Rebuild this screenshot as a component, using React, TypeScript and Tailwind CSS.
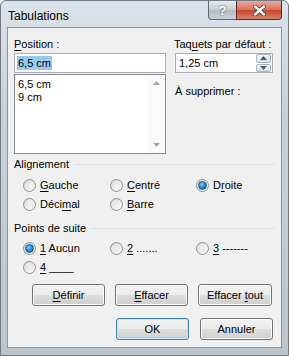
import React from 'react';

const font = { fontFamily: '"Liberation Sans", Arial, sans-serif' };

function U({ children }: { children: React.ReactNode }) {
    return <span className="underline underline-offset-[2px] decoration-[1px]">{children}</span>;
}

function Radio({ checked, label }: { checked?: boolean; label: React.ReactNode }) {
    return (
        <div className="flex items-center gap-[4px] h-[19px]">
            <div className="w-[13px] h-[13px] rounded-full border border-[#8e8f8f] bg-gradient-to-br from-[#d4d4d4] to-[#fcfcfc] flex items-center justify-center">
                <div className={`w-[9px] h-[9px] rounded-full ${checked ? 'bg-[radial-gradient(circle_at_40%_35%,#8fd3ff_0%,#2a8ad4_45%,#0b4f8f_100%)] border border-[#1d5a8c]' : 'bg-gradient-to-br from-[#e0e0e0] to-[#f8f8f8]'}`} />
            </div>
            <span className="text-[11px] text-black leading-[13px]">{label}</span>
        </div>
    );
}

function Btn({ children, def, w = 'w-[73px]' }: { children: React.ReactNode; def?: boolean; w?: string }) {
    return (
        <div className={`${w} h-[22px] rounded-[3px] border ${def ? 'border-[#3c7fb1] shadow-[inset_0_0_0_1px_#bfe7fb]' : 'border-[#707070] shadow-[inset_0_0_0_1px_#fcfcfc]'} bg-[linear-gradient(to_bottom,#f2f2f2_0%,#ebebeb_50%,#dddddd_51%,#cfcfcf_100%)] flex items-center justify-center text-[11px] text-black`}>
            <span className="whitespace-pre">{children}</span>
        </div>
    );
}

function GroupLabel({ children }: { children: React.ReactNode }) {
    return (
        <div className="flex items-center gap-[6px] h-[13px] mr-[6px]">
            <span className="text-[11px] leading-[13px] text-black">{children}</span>
            <div className="flex-1 h-px bg-[#d5dfe5]" />
        </div>
    );
}

export default function App() {
    return (
        <div style={font} className="w-[289px] h-[356px] flex flex-col bg-[linear-gradient(to_bottom,#dde3ea_0%,#c9d1d9_30%,#bcc4cc_100%)] rounded-t-[6px] border border-[#6f7a85]">
            {/* Title bar */}
            <div className="h-[26px] flex items-start justify-between">
                <span className="ml-[7px] mt-[8px] text-[12px] leading-[14px] text-black">Tabulations</span>
                <div className="flex mr-[6px]">
                    <div className="w-[28px] h-[19px] rounded-bl-[4px] border border-[#5f6770] border-t-0 border-r-0 bg-[linear-gradient(to_bottom,#e6e9ec_0%,#c9ced3_50%,#b3b9c0_51%,#cdd2d7_100%)] flex items-center justify-center">
                        <span className="text-white font-bold text-[13px] leading-none [text-shadow:0_0_2px_#333]">?</span>
                    </div>
                    <div className="w-[46px] h-[19px] rounded-br-[4px] border border-[#5f2a22] border-t-0 bg-[linear-gradient(to_bottom,#e9a99b_0%,#d7705b_50%,#c3452a_51%,#d8806a_100%)] flex items-center justify-center">
                        <svg width="13" height="11" viewBox="0 0 13 11">
                            <path d="M2 1.5 L11 9.5 M11 1.5 L2 9.5" stroke="#3a3a3a" strokeWidth="4" strokeLinecap="round" />
                            <path d="M2 1.5 L11 9.5 M11 1.5 L2 9.5" stroke="#ffffff" strokeWidth="2.4" strokeLinecap="round" />
                        </svg>
                    </div>
                </div>
            </div>

            {/* Client area */}
            <div className="mx-[6px] mb-[7px] flex-1 border border-[#8794a2] bg-[#f0f0f0] flex flex-col pt-[10px]">
                <div className="flex">
                    {/* Left column */}
                    <div className="ml-[6px] w-[152px] flex flex-col">
                        <span className="text-[11px] leading-[13px] text-black"><U>P</U>osition :</span>
                        <div className="mt-[2px] h-[20px] border border-[#abadb3] bg-white flex items-center pl-[2px]">
                            <span className="text-[11px] leading-[14px] bg-[#99c9ef] text-black px-[1px]">6,5 cm</span>
                        </div>
                        <div className="mt-px h-[80px] border border-[#828790] bg-white flex">
                            <div className="flex-1 pl-[3px] pt-[3px] text-[11px] leading-[13px] text-black">
                                <div>6,5 cm</div>
                                <div>9 cm</div>
                            </div>
                            <div className="w-[17px] bg-[#fafafa] flex flex-col justify-between items-center py-[6px]">
                                <svg width="7" height="4" viewBox="0 0 7 4"><path d="M0 4 L3.5 0 L7 4 Z" fill="#a3a3a3" /></svg>
                                <svg width="7" height="4" viewBox="0 0 7 4"><path d="M0 0 L3.5 4 L7 0 Z" fill="#a3a3a3" /></svg>
                            </div>
                        </div>
                    </div>
                    {/* Right column */}
                    <div className="ml-[8px] w-[100px] flex flex-col">
                        <span className="text-[11px] leading-[13px] text-black">Taq<U>u</U>ets par défaut :</span>
                        <div className="mt-[2px] ml-px w-[98px] h-[20px] border border-[#abadb3] bg-white flex items-center">
                            <span className="flex-1 pl-[3px] text-[11px] text-black">1,25 cm</span>
                            <div className="w-[15px] h-[18px] flex flex-col gap-px mr-px">
                                <div className="flex-1 rounded-[2px] border border-[#a7b5c4] bg-gradient-to-b from-[#f3f6f9] to-[#d6e0ea] flex items-center justify-center">
                                    <svg width="7" height="4" viewBox="0 0 7 4"><path d="M0 4 L3.5 0 L7 4 Z" fill="#4a5a6c" /></svg>
                                </div>
                                <div className="flex-1 rounded-[2px] border border-[#a7b5c4] bg-gradient-to-b from-[#f3f6f9] to-[#d6e0ea] flex items-center justify-center">
                                    <svg width="7" height="4" viewBox="0 0 7 4"><path d="M0 0 L3.5 4 L7 0 Z" fill="#4a5a6c" /></svg>
                                </div>
                            </div>
                        </div>
                        <span className="mt-[9px] ml-px text-[11px] leading-[17px] pt-[1px] text-black">À supprimer :</span>
                    </div>
                </div>

                {/* Alignement */}
                <div className="mt-[4px] ml-[6px]">
                    <GroupLabel>Alignement</GroupLabel>
                </div>
                <div className="mt-[5px] ml-[15px] grid grid-cols-[87px_86px_87px]">
                    <Radio label={<><U>G</U>auche</>} />
                    <Radio label={<><U>C</U>entré</>} />
                    <Radio checked label={<>D<U>r</U>oite</>} />
                    <Radio label={<>Déci<U>m</U>al</>} />
                    <Radio label={<><U>B</U>arre</>} />
                </div>

                {/* Points de suite */}
                <div className="mt-[8px] ml-[6px]">
                    <GroupLabel>Points de suite</GroupLabel>
                </div>
                <div className="mt-[4px] ml-[15px] grid grid-cols-[87px_86px_87px]">
                    <Radio checked label={<><U>1</U> Aucun</>} />
                    <Radio label={<><U>2</U> .......</>} />
                    <Radio label={<><U>3</U> -------</>} />
                    <Radio label={<><U>4</U> ____</>} />
                </div>

                {/* Action buttons */}
                <div className="mt-[7px] ml-[24px] flex gap-[10px]">
                    <Btn><U>D</U>éfinir</Btn>
                    <Btn><U>E</U>ffacer</Btn>
                    <Btn w="w-[74px]">Effacer <U>t</U>out</Btn>
                </div>
                <div className="mt-[12px] ml-[108px] flex gap-[11px]">
                    <Btn def>OK</Btn>
                    <Btn>Annuler</Btn>
                </div>
            </div>
        </div>
    );
}
